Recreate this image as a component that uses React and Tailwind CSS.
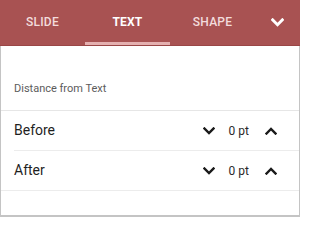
import React from 'react';

const TABS = [
  { label: 'SLIDE', active: false },
  { label: 'TEXT', active: true },
  { label: 'SHAPE', active: false },
];

const ROWS = [
  { label: 'Before', value: '0 pt', inset: true },
  { label: 'After', value: '0 pt', inset: false },
];

function Chevron({ up = false, className = '', stroke = 2.4 }) {
  return (
    <svg viewBox="0 0 12 8" className={className} fill="none">
      <path
        d={up ? 'M1.5 6.5 L6 2 L10.5 6.5' : 'M1.5 1.5 L6 6 L10.5 1.5'}
        stroke="currentColor"
        strokeWidth={stroke}
        strokeLinecap="square"
      />
    </svg>
  );
}

export default function App() {
  return (
    <div
      className="w-[300px] h-[217px] flex flex-col bg-white overflow-hidden"
      style={{ fontFamily: 'Roboto, "Noto Sans", sans-serif' }}
    >
      {/* Tab bar */}
      <div className="h-[46px] flex bg-[#a85252] border-b border-[#9a4646]">
        {TABS.map((tab) => (
          <div
            key={tab.label}
            className={`w-[85px] flex items-center justify-center pt-[1px] text-[12px] tracking-[0.2px] ${
              tab.active
                ? 'text-white font-bold border-b-[3px] border-[#e4b0b0]'
                : 'text-[#f3dcdc] font-medium border-b-[3px] border-transparent'
            }`}
          >
            {tab.label}
          </div>
        ))}
        <div className="flex-1 flex items-center justify-center pb-[1px]">
          <Chevron className="w-[13px] h-[9px] text-white" stroke={2.6} />
        </div>
      </div>

      {/* Body */}
      <div className="flex-1 flex flex-col border-x border-b-2 border-[#c4c4c4]">
        <div className="h-[65px] px-[13px] pt-[35px] text-[11px] leading-[16px] text-[#5c5c5c] border-b border-[#e6e6e6]">
          Distance from Text
        </div>
        {ROWS.map((row) => (
          <div key={row.label} className={row.inset ? 'pl-[13px]' : ''}>
            <div
              className={`h-[40px] flex items-center border-b border-[#ececec] ${
                row.inset ? '' : 'pl-[13px]'
              }`}
            >
              <span className="flex-1 text-[14px] text-[#1f1f1f]">{row.label}</span>
              <div className="flex items-center pr-[22px] text-[#1a1a1a]">
                <Chevron className="w-[12px] h-[8px]" />
                <span className="ml-[14px] mr-[16px] text-[12px] text-[#2a2a2a]">{row.value}</span>
                <Chevron up className="w-[12px] h-[8px]" />
              </div>
            </div>
          </div>
        ))}
      </div>
    </div>
  );
}
